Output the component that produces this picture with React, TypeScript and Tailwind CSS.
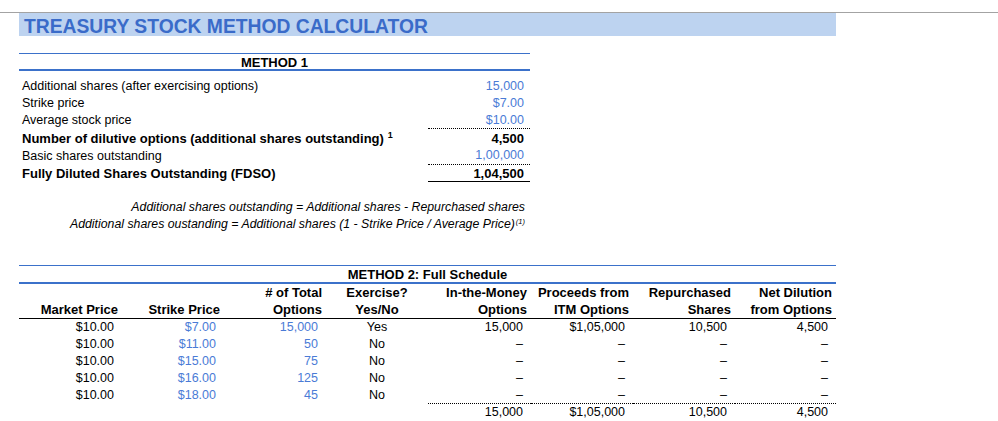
import React from "react";

const blue = "text-[#4a7bd6]";
const cols = "grid grid-cols-[103px_102px_102px_102px_103px_102px_102px_101px]";

type M1Row = {
  label: string;
  value: string;
  h: string;
  bold?: boolean;
  input?: boolean;
  note?: boolean;
  line?: "dotted" | "solid";
};

const method1: M1Row[] = [
  { label: "Additional shares (after exercising options)", value: "15,000", h: "h-[17px]", input: true },
  { label: "Strike price", value: "$7.00", h: "h-[17px]", input: true },
  { label: "Average stock price", value: "$10.00", h: "h-[17px]", input: true, line: "dotted" },
  { label: "Number of dilutive options (additional shares outstanding)", value: "4,500", h: "h-[18px]", bold: true, note: true },
  { label: "Basic shares outstanding", value: "1,00,000", h: "h-[18px]", input: true, line: "dotted" },
  { label: "Fully Diluted Shares Outstanding (FDSO)", value: "1,04,500", h: "h-[17px]", bold: true, line: "solid" },
];

const schedule = [
  { strike: "$7.00", total: "15,000", ex: "Yes", itm: "15,000", proceeds: "$1,05,000", rep: "10,500", net: "4,500" },
  { strike: "$11.00", total: "50", ex: "No", itm: "–", proceeds: "–", rep: "–", net: "–" },
  { strike: "$15.00", total: "75", ex: "No", itm: "–", proceeds: "–", rep: "–", net: "–" },
  { strike: "$16.00", total: "125", ex: "No", itm: "–", proceeds: "–", rep: "–", net: "–" },
  { strike: "$18.00", total: "45", ex: "No", itm: "–", proceeds: "–", rep: "–", net: "–" },
];

function Method1Row({ row }: { row: M1Row }) {
  const weight = row.bold ? "font-bold text-[13px]" : "text-[12.5px]";
  const border =
    row.line === "dotted"
      ? "border-b border-dotted border-black"
      : row.line === "solid"
      ? "border-b border-black"
      : "";
  return (
    <div className={`flex items-center ${row.h} text-black`}>
      <div className={`flex-1 pl-[3px] whitespace-nowrap leading-[17px] ${weight}`}>
        {row.label}
        {row.note && <sup className="ml-[4px] text-[9px]">1</sup>}
      </div>
      <div
        className={`w-[102px] h-full flex items-center justify-end pr-[6px] leading-[17px] ${weight} ${border} ${row.input ? blue : ""}`}
      >
        {row.value}
      </div>
    </div>
  );
}

export default function App() {
  return (
    <div className="w-[998px] h-[421px] bg-white overflow-hidden font-['Liberation_Sans',Arial,sans-serif] text-black">
      {/* sheet top edge */}
      <div className="h-[12px]" />
      <div className="h-px bg-[#a3a3a3]" />

      {/* title band */}
      <div className="ml-[19px] w-[817px] h-[23px] overflow-hidden bg-[#bdd3f0] pl-[5px] text-[19.3px] leading-[27px] font-bold text-[#3a6bc9] whitespace-nowrap">
        TREASURY STOCK METHOD CALCULATOR
      </div>

      {/* method 1 */}
      <div className="ml-[19px] w-[511px] mt-[17px]">
        <div className="border-t border-[#3b71ca] h-[16px] text-center text-[13px] font-bold leading-[17px]">
          METHOD 1
        </div>
        <div className="h-[2px] bg-[#3b71ca]" />
        <div className="h-[7px]" />
        {method1.map((r) => (
          <Method1Row key={r.label} row={r} />
        ))}

        <div className="mt-[17px] pr-[5px] text-right italic text-[12.3px] leading-[17px] whitespace-nowrap">
          <div>Additional shares outstanding = Additional shares - Repurchased shares</div>
          <div>
            Additional shares oustanding = Additional shares (1 - Strike Price / Average Price)
            <sup className="text-[7.5px] ml-[1px]">(1)</sup>
          </div>
        </div>
      </div>

      {/* method 2 */}
      <div className="ml-[19px] w-[817px] mt-[32px]">
        <div className="border-t border-[#3b71ca] h-[17px] text-center text-[13px] font-bold leading-[17px]">
          METHOD 2: Full Schedule
        </div>
        <div className="h-[2px] bg-[#3b71ca]" />

        {/* header */}
        <div className={`${cols} border-b border-black text-[13px] font-bold leading-[17px] whitespace-nowrap`}>
          <div />
          <div />
          <div className="text-right pr-[4px]"># of Total</div>
          <div className="text-center">Exercise?</div>
          <div className="text-right pr-[4px]">In-the-Money</div>
          <div className="text-right pr-[4px]">Proceeds from</div>
          <div className="text-right pr-[4px]">Repurchased</div>
          <div className="text-right pr-[4px]">Net Dilution</div>

          <div className="text-right pr-[4px]">Market Price</div>
          <div className="text-right pr-[4px]">Strike Price</div>
          <div className="text-right pr-[4px]">Options</div>
          <div className="text-center">Yes/No</div>
          <div className="text-right pr-[4px]">Options</div>
          <div className="text-right pr-[4px]">ITM Options</div>
          <div className="text-right pr-[4px]">Shares</div>
          <div className="text-right pr-[4px]">from Options</div>
        </div>

        {/* rows */}
        {schedule.map((r, i) => {
          const last = i === schedule.length - 1;
          const calc = `text-right pr-[8px] h-[17px] ${last ? "border-b border-dotted border-black" : ""}`;
          return (
            <div key={r.strike} className={`${cols} text-[12.5px] leading-[17px]`}>
              <div className="text-right pr-[8px]">$10.00</div>
              <div className={`text-right pr-[8px] ${blue}`}>{r.strike}</div>
              <div className={`text-right pr-[8px] ${blue}`}>{r.total}</div>
              <div className="text-center">{r.ex}</div>
              <div className={calc}>{r.itm}</div>
              <div className={calc}>{r.proceeds}</div>
              <div className={calc}>{r.rep}</div>
              <div className={calc}>{r.net}</div>
            </div>
          );
        })}

        {/* totals */}
        <div className={`${cols} text-[12.5px] leading-[17px]`}>
          <div />
          <div />
          <div />
          <div />
          <div className="text-right pr-[8px]">15,000</div>
          <div className="text-right pr-[8px]">$1,05,000</div>
          <div className="text-right pr-[8px]">10,500</div>
          <div className="text-right pr-[8px]">4,500</div>
        </div>
      </div>
    </div>
  );
}
